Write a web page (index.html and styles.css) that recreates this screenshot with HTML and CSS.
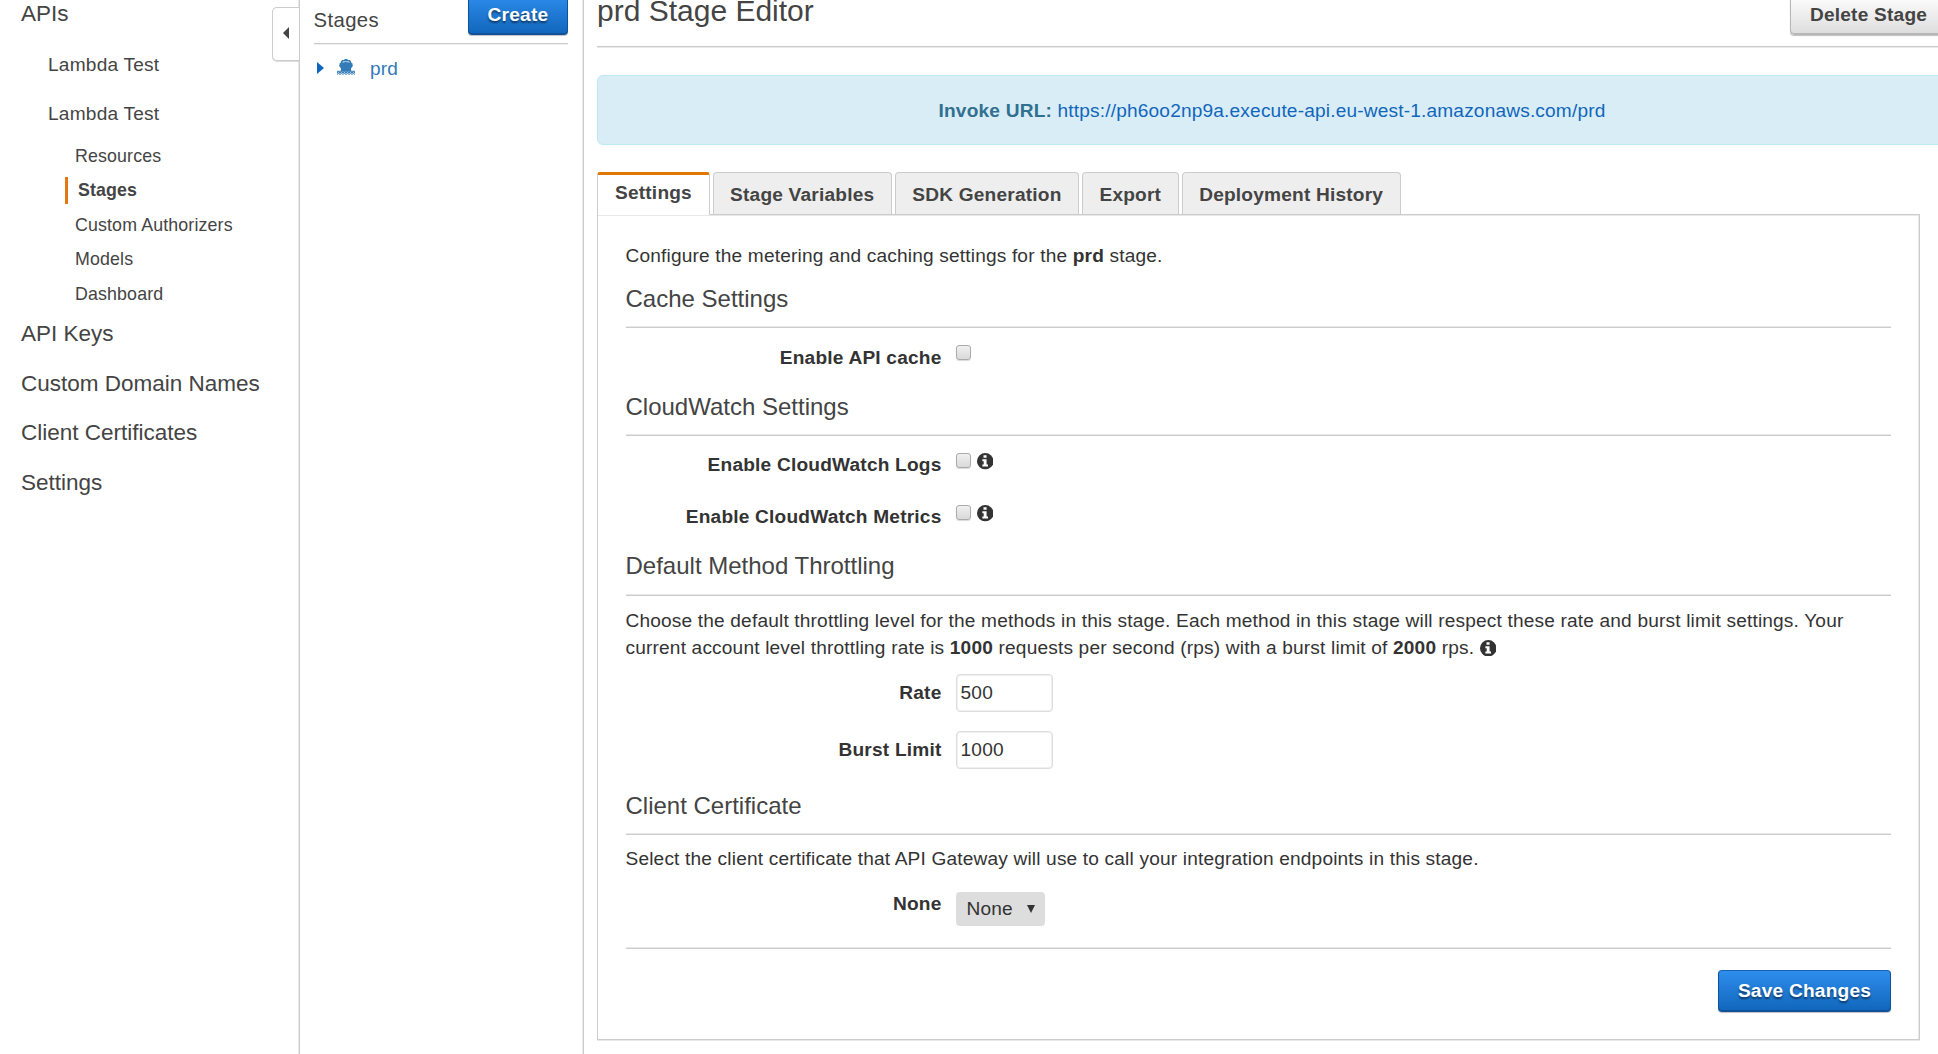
FILE: index.html
```html
<!DOCTYPE html>
<html lang="en">
<head>
<meta charset="utf-8">
<title>prd Stage Editor</title>
<link rel="stylesheet" href="styles.css">
</head>
<body>
<svg class="sprite" aria-hidden="true">
  <symbol id="info" viewBox="0 0 16 16">
    <circle cx="8" cy="8" r="8" fill="currentColor"/>
    <path d="M6.3 2.200h3v2.500h-3zM5.200 6h4.100v5.200h1.400v1.900H5.200v-1.900h1.300V7.900H5.200z" fill="#fff"/>
  </symbol>
</svg>
<div class="app">
  <nav class="sidebar">
    <a class="nav-top">APIs</a>
    <a class="nav-api">Lambda Test</a>
    <a class="nav-api">Lambda Test</a>
    <div class="nav-sub">
      <a>Resources</a>
      <a class="active">Stages</a>
      <a>Custom Authorizers</a>
      <a>Models</a>
      <a>Dashboard</a>
    </div>
    <a class="nav-top">API Keys</a>
    <a class="nav-top">Custom Domain Names</a>
    <a class="nav-top">Client Certificates</a>
    <a class="nav-top">Settings</a>
    <button class="collapse" aria-label="Collapse"><svg width="6" height="12" viewBox="0 0 6 12"><path d="M6 0v12L0 6z" fill="#444"/></svg></button>
  </nav>

  <section class="stages">
    <header class="stages-head">
      <span>Stages</span>
      <button class="btn primary create">Create</button>
    </header>
    <div class="stage-row">
      <svg class="caret" width="7" height="12" viewBox="0 0 7 12"><path d="M0 0v12l7-6z" fill="#16b"/></svg>
      <svg class="ship" width="18" height="16" viewBox="0 0 18 16" fill="currentColor">
        <path d="M7.500 0h3v1h1.500c1.100 0 1.700.6 2 1.500l.5 1.500 1 .5v1.500l.5.800-2 2.700.2 2.500H3.800l.2-2.500-2-2.700.5-.8V4.500l1-.5.5-1.500C4.300 1.600 4.900 1 6 1h1.500z"/>
        <path d="M5.300 3.500l.5-1.100h6.400l.5 1.100L9 2.900z" fill="#fff"/>
        <path d="M0 11.800h18v1H0z"/>
        <path d="M0 13.800l1.500-.8 1.500.8 1.500-.8 1.500.8 1.500-.8 1.500.8 1.500-.8 1.500.8 1.500-.8 1.500.8 1.500-.8 1.500.8M0 15.300l1.500-.8 1.500.8 1.500-.8 1.500.8 1.500-.8 1.500.8 1.500-.8 1.500.8 1.500-.8 1.500.8 1.500-.8 1.500.8" fill="none" stroke="currentColor"/>
      </svg>
      <span>prd</span>
    </div>
  </section>

  <main class="main">
    <div class="editor">
      <header class="editor-head">
        <h1>prd Stage Editor</h1>
        <button class="btn delete">Delete Stage</button>
      </header>
      <div class="alert"><b>Invoke URL:</b> <a>https://ph6oo2np9a.execute-api.eu-west-1.amazonaws.com/prd</a></div>
      <div class="tabs">
        <a class="tab current">Settings</a>
        <a class="tab">Stage Variables</a>
        <a class="tab">SDK Generation</a>
        <a class="tab">Export</a>
        <a class="tab">Deployment History</a>
      </div>
      <div class="panel">
        <p class="intro">Configure the metering and caching settings for the <b>prd</b> stage.</p>

        <h2>Cache Settings</h2>
        <div class="row row-cache"><label>Enable API cache</label><i class="check"></i></div>

        <h2>CloudWatch Settings</h2>
        <div class="row row-logs"><label>Enable CloudWatch Logs</label><i class="check"></i><svg class="info"><use href="#info"/></svg></div>
        <div class="row row-metrics"><label>Enable CloudWatch Metrics</label><i class="check"></i><svg class="info"><use href="#info"/></svg></div>

        <h2 class="throttling">Default Method Throttling</h2>
        <p class="throttle-text">Choose the default throttling level for the methods in this stage. Each method in this stage will respect these rate and burst limit settings. Your<br>current account level throttling rate is <b>1000</b> requests per second (rps) with a burst limit of <b>2000</b> rps. <svg class="info inline"><use href="#info"/></svg></p>
        <div class="row row-field"><label>Rate</label><input value="500"></div>
        <div class="row row-field"><label>Burst Limit</label><input value="1000"></div>

        <h2 class="certificate">Client Certificate</h2>
        <p class="cert-text">Select the client certificate that API Gateway will use to call your integration endpoints in this stage.</p>
        <div class="row row-select"><label>None</label><div class="select">None<svg width="8" height="8" viewBox="0 0 8 8"><path d="M0 0h8L4 8z" fill="#333"/></svg></div></div>

        <footer class="actions"><button class="btn primary save">Save Changes</button></footer>
      </div>
    </div>
  </main>
</div>
</body>
</html>
```
FILE: styles.css
```css
* { box-sizing: border-box; }
body {
  margin: 0;
  height: 1054px;
  overflow: hidden;
  background: #fff;
  color: #333;
  font: 19.1px/27px "Liberation Sans", Arial, sans-serif;
  letter-spacing: .17px;
}
h1, h2, p { margin: 0; font-weight: normal; }
h1, h2 { letter-spacing: 0; }
b, label { letter-spacing: .2px; }
.sprite { position: absolute; width: 0; height: 0; }
.app { display: grid; grid-template-columns: 300px 284px 1354px; height: 1054px; }

/* Sidebar */
.sidebar {
  position: relative;
  margin-top: -11px;
  color: #444;
  border-right: 1px solid #ccc;
  box-shadow: inset -1px 0 #e8e8e8;
}
.sidebar a { display: block; }
.nav-top { padding-left: 21px; font-size: 22.5px; line-height: 49.5px; letter-spacing: 0; }
.nav-api { padding-left: 48px; line-height: 49.5px; padding-top: 1px; margin-bottom: -1px; letter-spacing: .22px; }
.nav-sub { font-size: 17.8px; line-height: 34.5px; padding-top: 1.4px; margin-bottom: -2px; letter-spacing: .14px; }
.nav-sub a { padding-left: 75px; }
.nav-sub .active {
  margin: 3.5px 0 4px 64.5px;
  padding-left: 10.5px;
  border-left: 3px solid #e47911;
  line-height: 27px;
  font-weight: bold;
}
.collapse {
  position: absolute;
  top: 18px;
  right: 0;
  width: 27px;
  height: 54px;
  padding: 0 0 0 10px;
  display: flex;
  align-items: center;
  background: #fff;
  border: 1px solid #ccc;
  border-right: 0;
  border-radius: 5px 0 0 5px;
  box-shadow: 0 1px #ddd;
}
.collapse svg { margin-top: -2px; }

/* Stages column */
.stages { border-right: 1px solid #ccc; box-shadow: inset -1px 0 #e8e8e8; padding: 0 15px 0 13.5px; }
.stages-head {
  display: flex;
  justify-content: space-between;
  align-items: flex-start;
  height: 44px;
  border-bottom: 1px solid #ccc;
  box-shadow: 0 1px #eee;
  font-size: 20.3px;
  letter-spacing: .4px;
  color: #444;
}
.stages-head span { padding-top: 7px; }
.stage-row { display: flex; padding: 11px 0 0 3.5px; color: #337ab7; line-height: 27px; }
.caret { margin-top: 7px; }
.ship { margin: 4px 15px 0 13px; }

/* Buttons */
.btn {
  height: 42px;
  border-radius: 4px;
  font: bold 19.1px/27px "Liberation Sans", Arial, sans-serif;
  letter-spacing: .22px;
  padding: 0;
}
.primary {
  color: #fff;
  border: 1px solid #0f5299;
  border-top-color: #1562b3;
  background: linear-gradient(#2e8ded, #1166bb);
  box-shadow: inset 0 -1px #0f5299, 0 1px 1px rgba(0, 0, 0, .25);
  text-shadow: 0 2px 2px rgba(0, 0, 0, .5);
}
.create { width: 100px; margin-top: -7px; }
.save { width: 173px; padding-bottom: 2px; }
.delete {
  width: 157px;
  margin-top: -7px;
  color: #444;
  border: 1.5px solid #b7b7b7;
  background: linear-gradient(#fff, #ddd);
  box-shadow: inset 0 -1px #b7b7b7, 0 1px 1px rgba(0, 0, 0, .25);
}

/* Editor */
.main { padding-left: 13px; overflow: hidden; }
.editor { width: 1350px; }
.editor-head {
  display: flex;
  justify-content: space-between;
  align-items: flex-start;
  height: 47px;
  border-bottom: 1px solid #ccc;
  box-shadow: 0 1px #e8e8e8;
}
h1 { font-size: 30px; line-height: 40px; margin-top: -9px; color: #444; }
.alert {
  height: 70px;
  margin-top: 28px;
  padding-top: 21px;
  text-align: center;
  color: #31708f;
  background: #d9edf7;
  border: 1px solid #bce8f1;
  border-radius: 6px;
}
.alert a { color: #16b; }

.tabs { display: flex; gap: 3px; margin-top: 27px; height: 42px; }
.tab {
  padding: 8px 16.5px 0;
  border: 1px solid #ccc;
  border-bottom: 0;
  border-radius: 4px 4px 0 0;
  background: #eee;
  color: #444;
  font-weight: bold;
  letter-spacing: .2px;
}
.tab.current {
  height: 43px;
  padding: 4px 16.7px 0 17px;
  background: #fff;
  border-top: 3px solid #e07700;
  border-radius: 3px 3px 0 0;
  z-index: 1;
}

.panel {
  width: 1323px;
  height: 826px;
  padding: 27px 28px 0 27.5px;
  border: 1px solid #ccc;
  box-shadow: inset 0 1px #e8e8e8, inset -1px 0 #e8e8e8, 0 1px #e8e8e8;
}
.intro { margin-bottom: 16px; }
h2 {
  height: 43px;
  font-size: 24px;
  line-height: 27px;
  color: #444;
  border-bottom: 1px solid #ccc;
  box-shadow: inset 0 -1px #e8e8e8;
}
.row { display: flex; align-items: flex-start; }
.row label { width: 316px; margin-right: 14px; text-align: right; font-weight: bold; }
.check {
  width: 15px;
  height: 15px;
  margin-top: 2px;
  border: 1px solid #aaa;
  border-radius: 3px;
  background: linear-gradient(#f0f0f0, #d9d9d9);
  box-shadow: 0 1px 1px rgba(0, 0, 0, .15);
}
.info { width: 16.5px; height: 16.5px; margin: 2px 0 0 6px; color: #333; }
.info.inline { margin: 0; vertical-align: -2px; }
.row-cache { margin: 16px 0 22px; }
.row-cache .check { margin-top: 1px; }
.row-logs { margin: 15px 0 25px; }
.row-metrics { margin-bottom: 22px; }
.throttling { height: 44px; }
.throttle-text { margin: 11px 0 13px; }
.row-field { height: 57px; }
.row-field label { padding-top: 5px; }
.row-field input {
  width: 97px;
  height: 38px;
  padding: 0 4px;
  border: 1px solid #ddd;
  border-radius: 4px;
  font: inherit;
  letter-spacing: .22px;
  color: #333;
  box-shadow: inset 0 0 0 1px #f0f0f0;
}
.certificate { margin-top: 4px; }
.cert-text { margin: 10px 0 20px; }
.row-select { height: 56px; }
.row-select label { margin-top: -2px; }
.select {
  display: flex;
  align-items: center;
  width: 89.5px;
  height: 34px;
  padding: 0 0 1px 11px;
  background: #ddd;
  border-radius: 4px;
}
.select svg { margin-left: 14px; }
.actions { display: flex; justify-content: flex-end; border-top: 1px solid #ccc; padding-top: 21px; box-shadow: 0 -1px #e8e8e8; }
```
